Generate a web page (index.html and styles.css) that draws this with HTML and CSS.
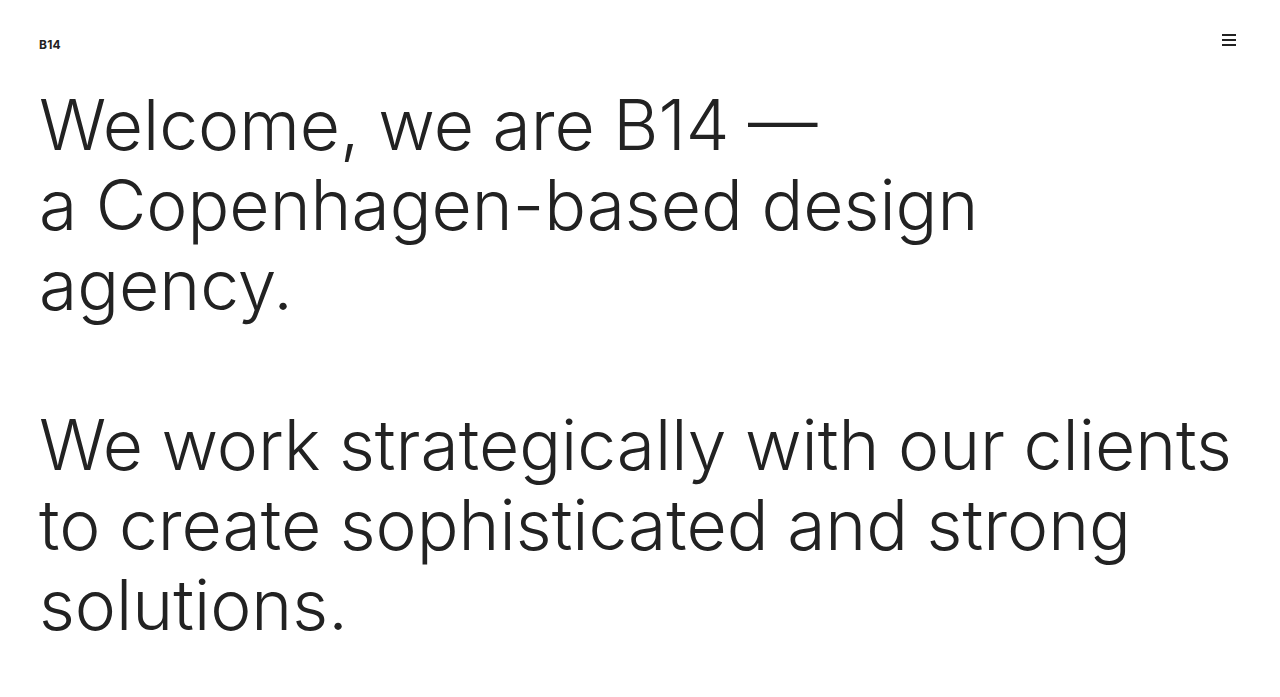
FILE: index.html
```html
<!DOCTYPE html>
<html lang="en">
<head>
<meta charset="utf-8">
<title>B14</title>
<link rel="stylesheet" href="styles.css">
</head>
<body>
<header class="header">
  <a class="logo" href="#">B14</a>
  <button class="menu" aria-label="Menu">
    <span></span><span></span><span></span>
  </button>
</header>
<main class="intro">
  <p>Welcome, we are B14 —<br>a Copenhagen-based design agency.</p>
  <p>We work strategically with our clients to create sophisticated and strong solutions.</p>
</main>
</body>
</html>
```
FILE: styles.css
```css
html, body {
  margin: 0;
  padding: 0;
  background: #fff;
  color: #222;
  font-family: "Inter", "Liberation Sans", sans-serif;
}
.header {
  display: flex;
  justify-content: space-between;
  align-items: flex-start;
  padding: 34px 44px 0 39px;
}
.logo {
  font-size: 12px;
  font-weight: 700;
  color: #222;
  text-decoration: none;
  margin-top: 3px;
  letter-spacing: 0.2px;
}
.menu {
  display: flex;
  flex-direction: column;
  gap: 3px;
  padding: 0;
  border: 0;
  background: none;
  width: 14px;
}
.menu span {
  display: block;
  height: 2px;
  width: 14px;
  background: #222;
}
.intro {
  padding: 33px 30px 0 39px;
}
.intro p {
  margin: 0 0 80px;
  font-size: 69.5px;
  font-weight: 300;
  line-height: 80px;
  letter-spacing: 0;
  word-spacing: -1px;
}
```
